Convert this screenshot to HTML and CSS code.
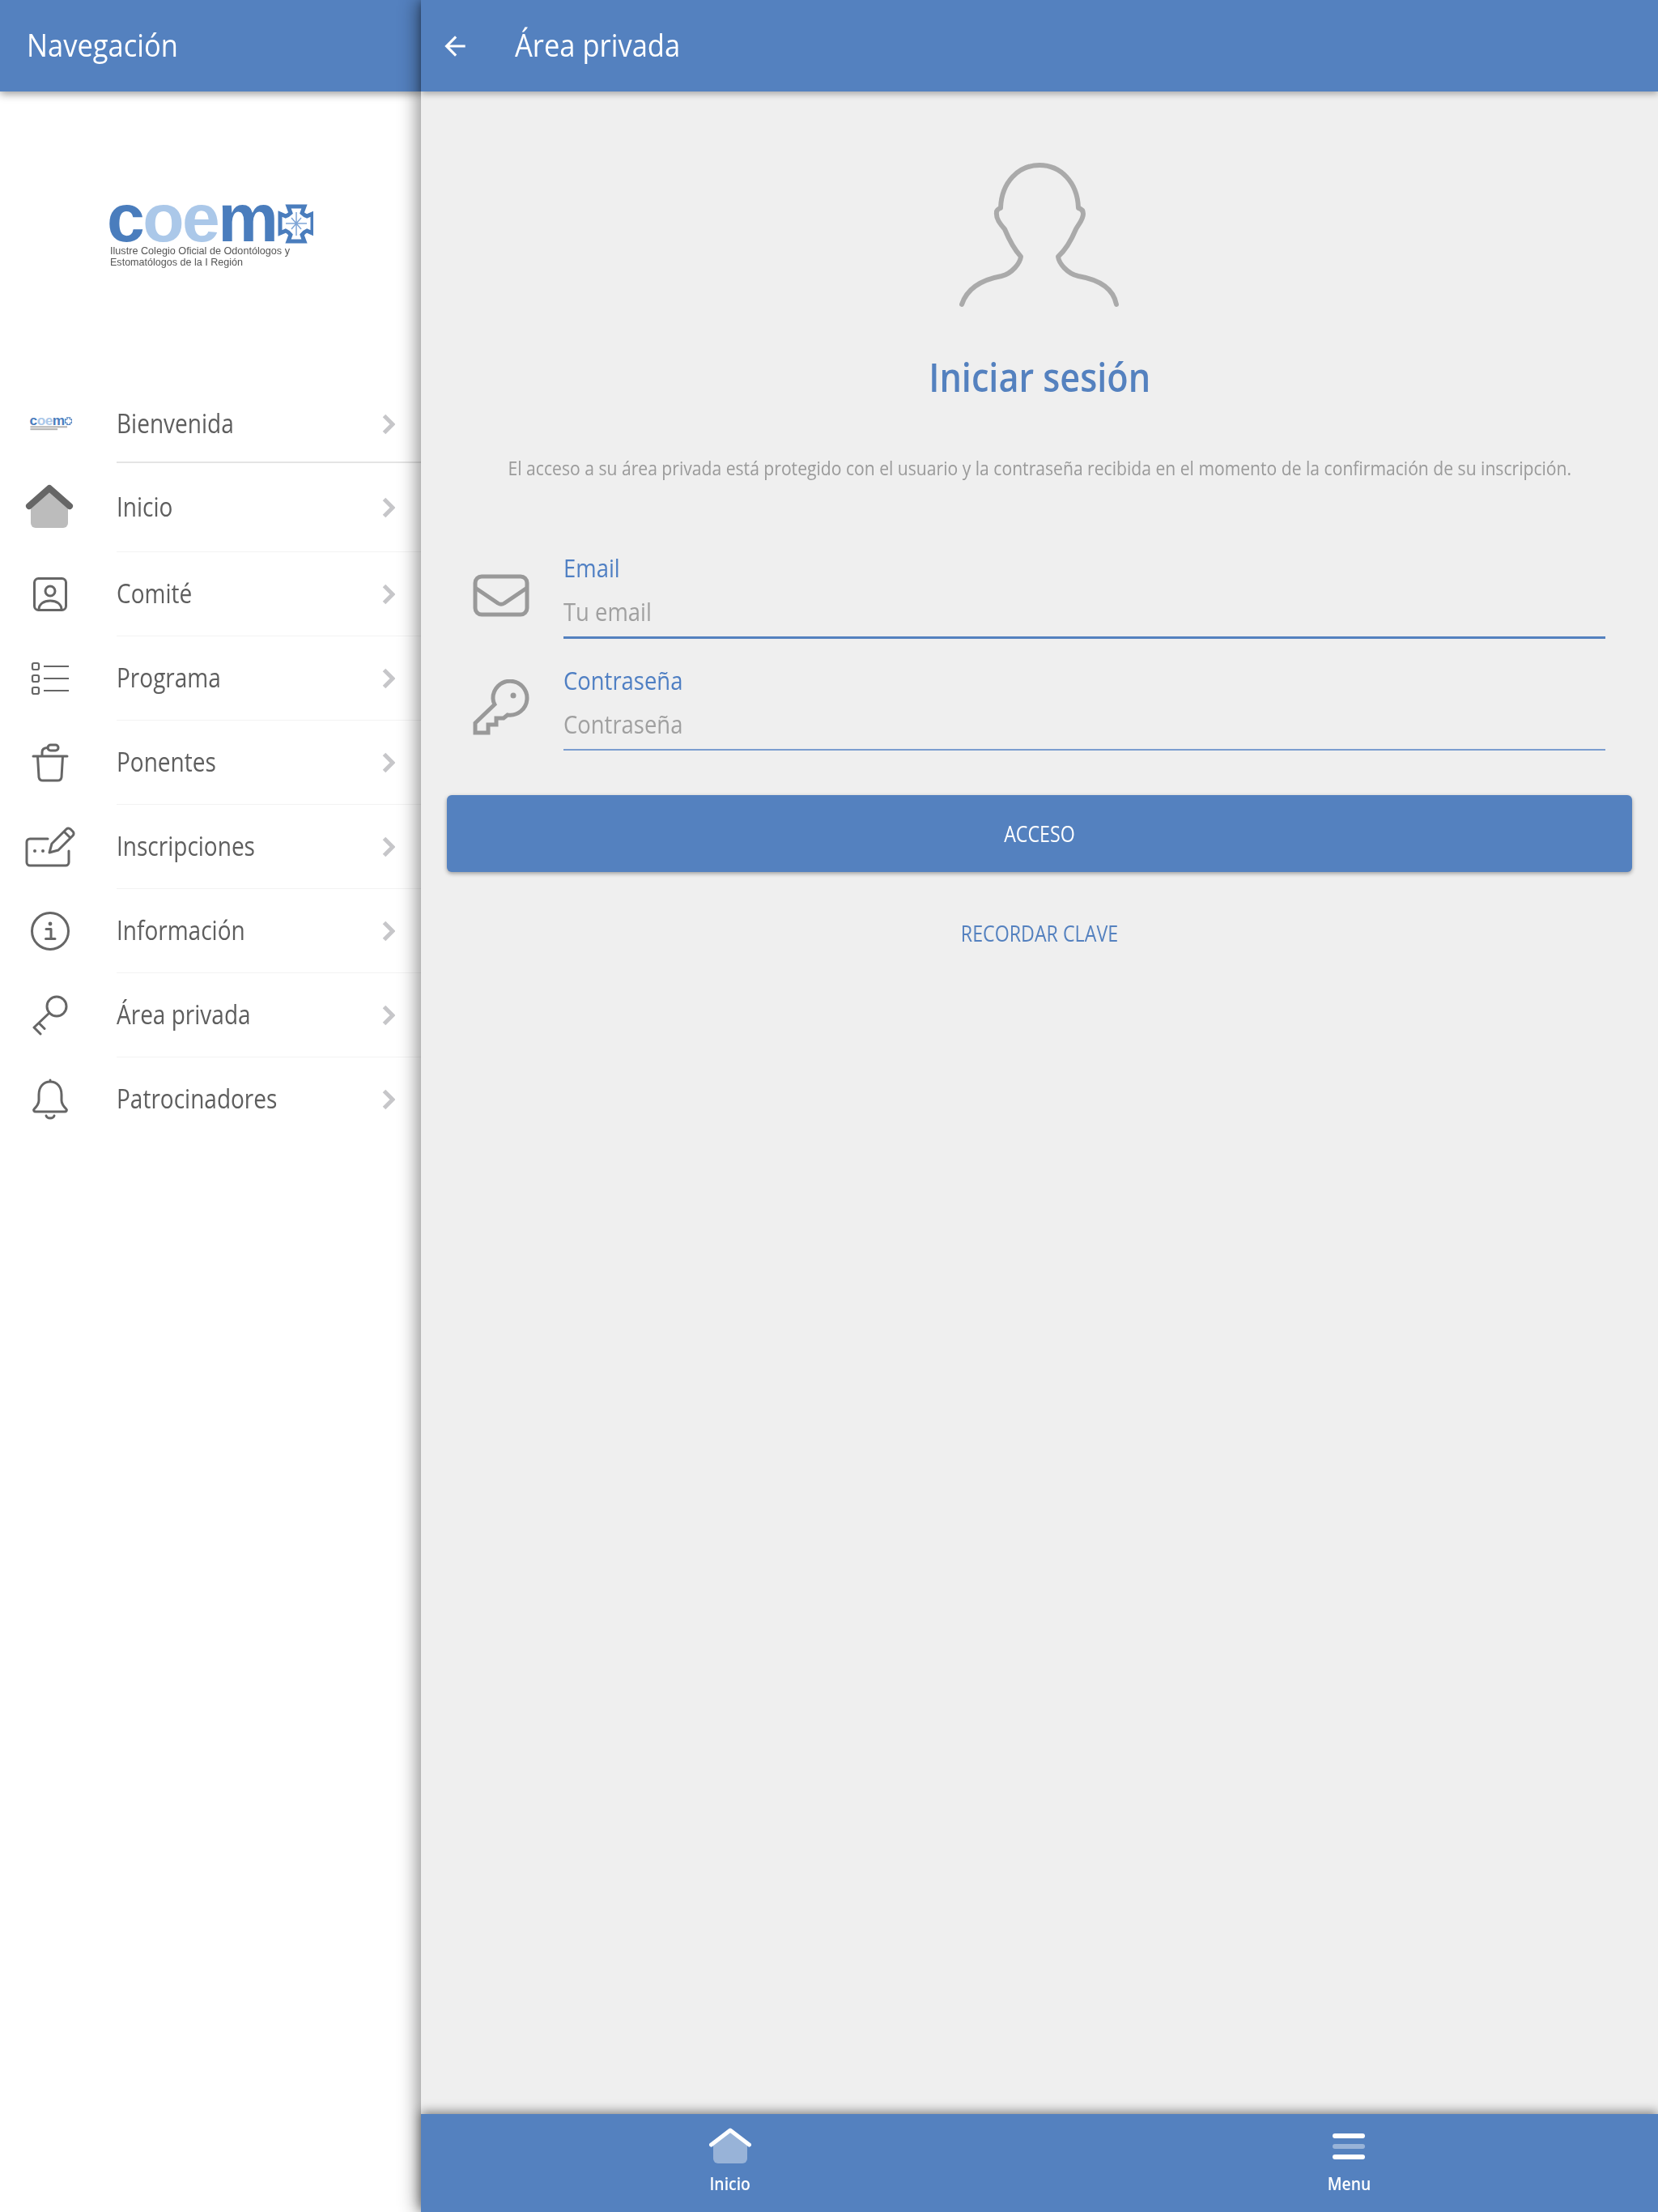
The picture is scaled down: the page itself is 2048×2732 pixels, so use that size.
FILE: index.html
```html
<!DOCTYPE html>
<html lang="es">
<head>
<meta charset="utf-8">
<title>Área privada</title>
<link rel="stylesheet" href="styles.css">
</head>
<body>
<svg class="defs" aria-hidden="true">
  <symbol id="chev" viewBox="0 0 16 26"><path class="chev-line" d="M2.5 2.5L13 13L2.5 23.5"/></symbol>
</svg>
<div class="app">
  <aside class="side">
    <header class="bar side-bar"><h2 class="bar-title">Navegación</h2></header>
    <div class="side-logo"><svg class="logo-big" viewBox="-6 -34 258 114">
      <text class="lg-big" x="-3" y="46"><tspan class="lg-dark">c</tspan><tspan class="lg-light">oe</tspan><tspan class="lg-dark">m</tspan></text>
      <path class="lg-cross" d="M221 3H241L238 11Q241 14 244 15L251 12V36L244 33Q241 34 238 38L241 46H221L224 38Q221 34 218 33L211 36V12L218 15Q221 14 224 11Z"/>
      <path class="lg-cross-in" d="M231 10V39M218 24H244M225 17L237 31M237 17L225 31"/>
      <text class="lg-small" x="1" y="62" textLength="222" lengthAdjust="spacingAndGlyphs">Ilustre Colegio Oficial de Odontólogos y</text>
      <text class="lg-small" x="1" y="76" textLength="164" lengthAdjust="spacingAndGlyphs">Estomatólogos de la I Región</text>
    </svg></div>
    <nav class="menu">
      <a class="item item-first"><span class="ic"><svg class="logo-small" viewBox="-6 -34 258 120">
        <text class="lg-big" x="-3" y="46"><tspan class="lg-dark">c</tspan><tspan class="lg-light">oe</tspan><tspan class="lg-dark">m</tspan></text>
        <path class="lg-cross" d="M221 3H241L238 11Q241 14 244 15L251 12V36L244 33Q241 34 238 38L241 46H221L224 38Q221 34 218 33L211 36V12L218 15Q221 14 224 11Z"/>
        <rect class="lg-tiny" x="1" y="54" width="222" height="10"/><rect class="lg-tiny" x="1" y="68" width="164" height="10"/>
      </svg></span><span class="lbl">Bienvenida</span><svg class="chev"><use href="#chev"/></svg></a>
      <a class="item item-home"><span class="ic"><svg class="ico" viewBox="0 0 64 64"><path class="f-grey" d="M8 30L31 10L54 30V51a6 6 0 0 1-6 6H14a6 6 0 0 1-6-6Z"/><path class="s-roof" d="M6 30L31 8L56 30"/></svg></span><span class="lbl">Inicio</span><svg class="chev"><use href="#chev"/></svg></a>
      <a class="item"><span class="ic"><svg class="ico" viewBox="0 0 64 64"><rect class="s" x="12.5" y="12.5" width="39" height="39" rx="5"/><circle class="s" cx="32" cy="28" r="6"/><path class="s" d="M18 51C18 44 24 40 32 40C40 40 46 44 46 51"/></svg></span><span class="lbl">Comité</span><svg class="chev"><use href="#chev"/></svg></a>
      <a class="item"><span class="ic"><svg class="ico" viewBox="0 0 64 64"><rect class="s2" x="10" y="13" width="8" height="8" rx="2"/><rect class="s2" x="10" y="28" width="8" height="8" rx="2"/><rect class="s2" x="10" y="43" width="8" height="8" rx="2"/><path class="s2" d="M24 17H55M24 32H55M24 47H55"/></svg></span><span class="lbl">Programa</span><svg class="chev"><use href="#chev"/></svg></a>
      <a class="item"><span class="ic"><svg class="ico" viewBox="0 0 64 64"><path class="s" d="M11 24H53M16.5 24L18 50a5 5 0 0 0 5 4H41a5 5 0 0 0 5-4L47.500 24M22 24V19C22 15 25 13.500 29 13.500"/><rect class="s" x="29" y="10" width="13" height="7" rx="3.500"/></svg></span><span class="lbl">Ponentes</span><svg class="chev"><use href="#chev"/></svg></a>
      <a class="item"><span class="ic"><svg class="ico" viewBox="0 0 64 64"><path class="s" d="M29 22H7a4 4 0 0 0-4 4V51a4 4 0 0 0 4 4H51a4 4 0 0 0 4-4V37"/><path class="s" d="M31 39L34 28L52 10a3.500 3.500 0 0 1 5 0l3 3a3.500 3.500 0 0 1 0 5L42 36ZM49 13L57 21"/><circle class="dot" cx="13" cy="37" r="2"/><circle class="dot" cx="23" cy="37" r="2"/></svg></span><span class="lbl">Inscripciones</span><svg class="chev"><use href="#chev"/></svg></a>
      <a class="item"><span class="ic"><svg class="ico" viewBox="0 0 64 64"><circle class="s" cx="32" cy="32" r="22.500"/><circle class="dot" cx="32" cy="23" r="2.400"/><path class="s" d="M27 29.500H33V41M26.500 41.500H38"/></svg></span><span class="lbl">Información</span><svg class="chev"><use href="#chev"/></svg></a>
      <a class="item"><span class="ic"><svg class="ico" viewBox="0 0 64 64"><circle class="s" cx="40" cy="21" r="12"/><path class="s" d="M31 29L12 47L20 55M18 41.500L25 48.500"/></svg></span><span class="lbl">Área privada</span><svg class="chev"><use href="#chev"/></svg></a>
      <a class="item item-last"><span class="ic"><svg class="ico" viewBox="0 0 64 64"><path class="s" d="M32 10C23 10 18 17 18 26V33C18 38 15 41 12 44C11 45 12 47 14 47H50C52 47 53 45 52 44C49 41 46 38 46 33V26C46 17 41 10 32 10ZM32 8V10M27 52C28 56 36 56 37 52"/></svg></span><span class="lbl">Patrocinadores</span><svg class="chev"><use href="#chev"/></svg></a>
    </nav>
  </aside>
  <main class="main">
    <header class="bar main-bar">
      <svg class="back" viewBox="0 0 24 24"><path class="f-white" d="M20 11H7.830l5.590-5.590L12 4l-8 8 8 8 1.410-1.410L7.830 13H20v-2z"/></svg>
      <h1 class="bar-title">Área privada</h1>
    </header>
    <section class="content">
      <svg class="person" viewBox="80 28 208 184"><path class="person-line" d="M88 206C95 185 115 175 137 171C150 168 160 155 161 147C152 137 146 125 141 113C135 106 130 100 131 92C131 90 133 88 136 87C137 55 158 34 184 34C210 34 231 55 232 87C236 88 238 91 238 94C238 101 233 106 229 113C224 125 218 137 207 147C208 155 218 168 232 171C255 175 275 185 279 206"/></svg>
      <h2 class="login-title">Iniciar sesión</h2>
      <p class="intro">El acceso a su área privada está protegido con el usuario y la contraseña recibida en el momento de la confirmación de su inscripción.</p>
      <form class="form">
        <div class="row row-a">
          <svg class="field-ic mail" viewBox="0 0 70 53"><rect class="fs" x="3" y="3" width="64" height="47" rx="8"/><path class="fs" d="M3 17L31 36Q35 38.500 39 36L67 17"/></svg>
          <label class="field field-on"><span class="field-lbl">Email</span><span class="field-ph">Tu email</span></label>
        </div>
        <div class="row">
          <svg class="field-ic key" viewBox="0 0 70 69"><path class="fs fs-key" d="M27 31L3 54V66H19V56H29V48H38L43 44A21 21 0 1 0 25 24C25 27 26 29 27 31Z"/><circle class="fd" cx="50" cy="20" r="3.500"/></svg>
          <label class="field"><span class="field-lbl">Contraseña</span><span class="field-ph">Contraseña</span></label>
        </div>
      </form>
      <button class="btn" type="button"><span class="btn-t">ACCESO</span></button>
      <a class="remember">RECORDAR CLAVE</a>
    </section>
    <footer class="tabs">
      <a class="tab"><svg class="tab-ic" viewBox="0 0 52 46"><path class="f-tr" d="M5 21L26 5L47 21V38a6 6 0 0 1-6 6H11a6 6 0 0 1-6-6Z"/><path class="s-white" d="M2.500 21L26 3L49.500 21"/></svg><span class="tab-lbl">Inicio</span></a>
      <a class="tab"><span class="burger"><i class="b"></i><i class="b b-mid"></i><i class="b"></i></span><span class="tab-lbl">Menu</span></a>
    </footer>
  </main>
</div>
</body>
</html>
```
FILE: styles.css
```css
* { box-sizing: border-box; }
html, body { margin: 0; height: 100%; }
body { font-family: "Open Sans", "Noto Sans", sans-serif; font-stretch: 90%; background: #fff; color: #666; overflow: hidden; }
.defs { width: 0; height: 0; display: block; position: absolute; }
.app { display: flex; height: 2732px; }

/* The screenshot's face is narrower than the closest installed one */
.bar-title, .field-lbl, .field-ph { transform: scaleX(.885); transform-origin: left center; }
.lbl { transform: scaleX(.875); transform-origin: left center; }
.login-title { transform: scaleX(.9); }
.intro, .tab-lbl { transform: scaleX(.88); }
.btn-t, .remember { display: inline-block; transform: scaleX(.86); }

.bar { height: 113px; background: #5481bf; display: flex; align-items: center; color: #fff; flex: none; }
.bar-title { margin: 0 0 5px; font-size: 39px; font-weight: 500; line-height: 1; }

.side { width: 520px; flex: none; background: #fff; display: flex; flex-direction: column; }
.side-bar { padding-left: 33px; box-shadow: 0 3px 10px rgba(0,0,0,.4); position: relative; z-index: 1; }
.side-logo { height: 362px; padding: 105px 0 0 129px; }
.logo-big { width: 258px; height: 114px; display: block; filter: blur(.5px); }
.logo-small { width: 53px; height: 25px; display: block; margin-top: -7px; }

.lg-big { font-family: "Liberation Sans", sans-serif; font-weight: 700; font-size: 84px; letter-spacing: -2.500px; font-stretch: normal; }
.lg-dark { fill: #4a7dbd; }
.lg-light { fill: #abc8e9; }
.lg-cross { fill: #fff; stroke: #4a7dbd; stroke-width: 5; }
.lg-cross-in { fill: none; stroke: #7fa5d6; stroke-width: 1.5; }
.lg-small { font-family: "Liberation Sans", sans-serif; font-size: 12px; fill: #555; font-stretch: normal; }
.lg-tiny { fill: #b5b5b5; }

.menu { display: flex; flex-direction: column; }
.item { display: flex; align-items: center; height: 104px; padding-left: 30px; position: relative; }
.item::after { content: ""; position: absolute; left: 144px; right: 0; bottom: 0; height: 1px; background: #f3f3f3; }
.item-first { height: 97px; }
.item-first::after { height: 2px; background: #e4e4e4; }
.item-home { height: 110px; }
.item-last::after { display: none; }
.ic { width: 64px; height: 64px; flex: none; display: flex; align-items: center; justify-content: center; }
.ico { width: 64px; height: 64px; display: block; }
.lbl { margin: 0 0 3px 50px; font-size: 32px; color: #5e5e5e; flex: 1; }
.chev { width: 16px; height: 26px; margin-right: 32px; flex: none; }
.chev-line { fill: none; stroke: #c6c6c9; stroke-width: 5; }

.s { fill: none; stroke: #666; stroke-width: 3; stroke-linecap: round; stroke-linejoin: round; }
.s2 { fill: none; stroke: #666; stroke-width: 2.200; }
.dot { fill: #666; }
.f-grey { fill: #bcbcbc; }
.s-roof { fill: none; stroke: #666; stroke-width: 8; stroke-linecap: round; stroke-linejoin: round; }

.main { flex: 1; min-width: 0; background: #efefef; display: flex; flex-direction: column; position: relative; z-index: 2; box-shadow: -4px 0 22px rgba(0,0,0,.45); }
.main-bar { padding-left: 23px; box-shadow: 0 3px 8px rgba(0,0,0,.3); position: relative; z-index: 1; }
.back { width: 38px; height: 38px; margin-right: 55px; display: block; }
.f-white { fill: #fff; }

.content { flex: 1; padding: 85px 32px 0; display: flex; flex-direction: column; align-items: center; }
.person { width: 208px; height: 184px; display: block; flex: none; }
.person-line { fill: none; stroke: #aaa; stroke-width: 6; stroke-linecap: round; stroke-linejoin: round; }
.login-title { margin: 54px 0 0; font-size: 48px; line-height: 60px; font-weight: 600; color: #5481bf; }
.intro { margin: 66px 0 0; font-size: 24px; line-height: 32px; color: #9a9a9a; white-space: nowrap; }

.form { align-self: stretch; margin: 87px 0 0; padding: 0 33px 0 32px; display: flex; flex-direction: column; gap: 31px; }
.row { display: flex; align-items: center; gap: 42px; }
.field-ic { width: 70px; flex: none; display: block; }
.mail { height: 53px; }
.key { height: 69px; }
.fs { fill: none; stroke: #999; stroke-width: 5; stroke-linejoin: round; }
.fs-key { stroke-linejoin: miter; stroke-width: 5; }
.fd { fill: #999; }
.field { flex: 1; display: flex; flex-direction: column; gap: 14px; padding-bottom: 11px; border-bottom: 2px solid #7b9dd0; }
.field-on { border-bottom: 3px solid #5481bf; }
.field-lbl { font-size: 31px; line-height: 40px; color: #4f7fc3; }
.field-ph { font-size: 31px; line-height: 40px; color: #a0a0a0; }

.btn { align-self: stretch; height: 95px; margin-top: 55px; border: 0; border-radius: 6px; background: #5481bf; color: #fff; font: inherit; font-size: 27px; box-shadow: 0 2px 5px rgba(0,0,0,.35); flex: none; }
.remember { margin-top: 56px; font-size: 27px; line-height: 40px; color: #5481bf; }

.tabs { height: 121px; flex: none; background: #5481bf; display: flex; color: #fff; box-shadow: 0 -3px 12px rgba(0,0,0,.45); position: relative; }
.tab { flex: 1; display: flex; flex-direction: column; align-items: center; padding-top: 17px; }
.tab-ic { width: 52px; height: 46px; display: block; }
.f-tr { fill: rgba(255,255,255,.4); }
.s-white { fill: none; stroke: #fff; stroke-width: 5; stroke-linecap: round; stroke-linejoin: round; }
.burger { height: 46px; width: 40px; display: flex; flex-direction: column; justify-content: center; gap: 7px; }
.b { display: block; height: 6px; border-radius: 3px; background: #fff; }
.b-mid { background: rgba(255,255,255,.4); }
.tab-lbl { margin-top: 7px; font-size: 22px; line-height: 30px; font-weight: 600; }
```
